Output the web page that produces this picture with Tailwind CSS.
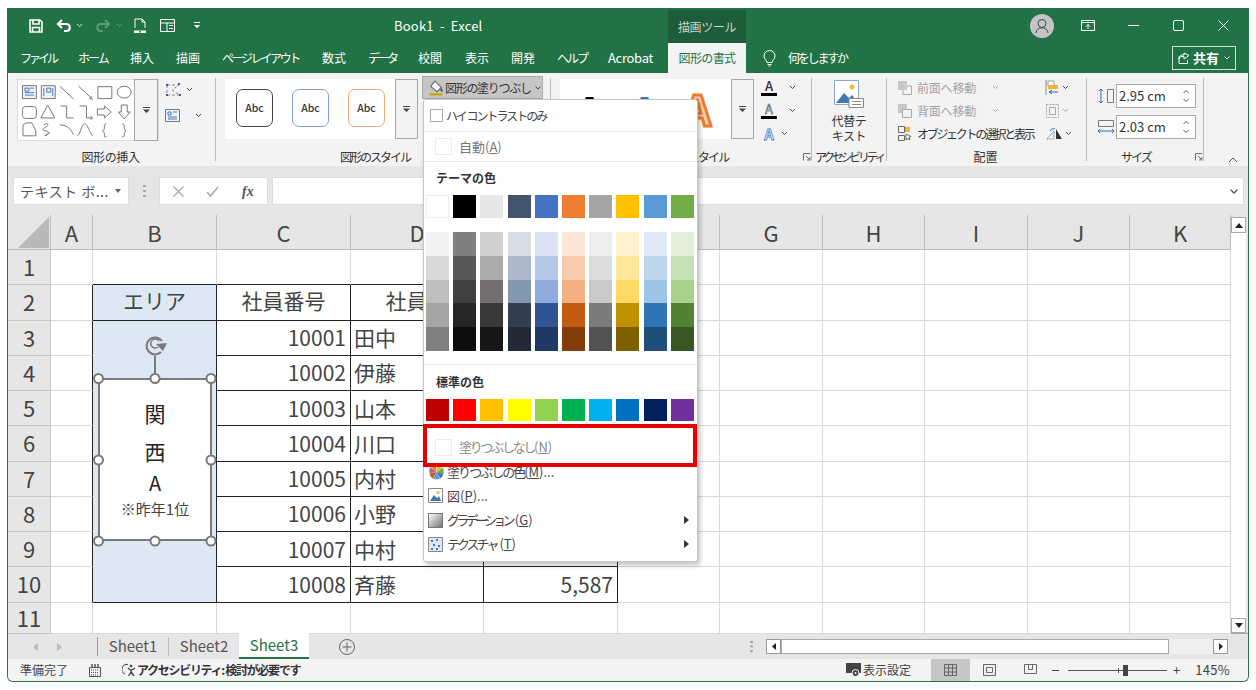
<!DOCTYPE html>
<html lang="ja">
<head>
    <meta charset="UTF-8">
    <script src="https://cdn.jsdelivr.net/npm/@tailwindcss/browser@4"></script>
    <title>Book1 - Excel</title>
</head>
<body class="bg-white font-['Noto_Sans_CJK_JP','Noto_Sans',sans-serif] text-[12px] text-[#333]">
<div class="relative w-[1256px] h-[690px] overflow-hidden pt-[8px] pl-[7px]">
    <div class="w-[1242px] h-[674px] flex flex-col overflow-hidden border-x border-b border-[#217346] rounded-b-md bg-[#e6e6e6]">

        <!-- Title bar -->
        <div class="h-[35px] shrink-0 bg-[#217346] flex items-center text-white">
            <div class="w-[660px] flex items-center pl-[21px] h-full">
                <svg class="w-[14px] h-[14px]" viewBox="0 0 14 14" fill="none" stroke="#fff" stroke-width="1.6"><path d="M1 1h10l2 2v10H1z"/><path d="M4 1v4h6V1M3.500 13V8.500h7V13"/></svg>
                <svg class="w-[16px] h-[14px] ml-[13px]" viewBox="0 0 16 14" fill="none" stroke="#fff" stroke-width="2.200"><path d="M6 1 2 5l4 4"/><path d="M2 5h8c5 0 5 7 0 7H8"/></svg>
                <svg class="w-[7px] h-[5px] ml-[4px]" viewBox="0 0 7 5" fill="none" stroke="#cfe0d6"><path d="m1 1 2.500 2.500L6 1"/></svg>
                <svg class="w-[16px] h-[14px] ml-[12px]" viewBox="0 0 16 14" fill="none" stroke="#5d9a78" stroke-width="2"><path d="m10 1 4 4-4 4"/><path d="M14 5H6c-5 0-5 7 0 7h2"/></svg>
                <svg class="w-[7px] h-[5px] ml-[5px]" viewBox="0 0 7 5" fill="none" stroke="#5d9a78"><path d="m1 1 2.500 2.500L6 1"/></svg>
                <svg class="w-[14px] h-[16px] ml-[10px]" viewBox="0 0 14 16" fill="none" stroke="#fff"><path d="M2 10V1h7l3 3v6M9 1v3h3"/><path d="M1 12.500h12v2.500H1z" fill="#fff" stroke="none"/><circle cx="7" cy="13.700" r="1" fill="#217346" stroke="none"/></svg>
                <svg class="w-[15px] h-[13px] ml-[13px]" viewBox="0 0 15 13" fill="none" stroke="#fff"><path d="M.5.500h14v12H.5zM.5 4h14M7 4v8.500M9 6.500h4M9 9.500h4"/></svg>
                <svg class="w-[6px] h-[7px] ml-[19px]" viewBox="0 0 6 7" fill="#fff"><path d="M0 0h6v1H0zM0 3h6L3 6.500z"/></svg>
                <span class="ml-[194px] text-[13px] tracking-[.2px] whitespace-pre">Book1  -  Excel</span>
            </div>
            <div class="w-[78px] h-[33px] self-end bg-[#1e5d3a] flex items-center justify-center text-[#c5d6cb] text-[12px] tracking-[-.4px]">描画ツール</div>
            <div class="flex-1 flex items-center h-full">
                <div class="ml-[284px] w-[24px] h-[24px] rounded-full bg-[#c4c4c4] flex items-center justify-center">
                    <svg class="w-[16px] h-[16px]" viewBox="0 0 16 16" fill="none" stroke="#444"><circle cx="8" cy="5.500" r="4"/><path d="M2 15c0-7 12-7 12 0"/></svg>
                </div>
                <svg class="w-[14px] h-[11px] ml-[27px]" viewBox="0 0 14 11" fill="none" stroke="#fff"><path d="M.5.500h13v10H.5zM.5 2.500h13"/><path d="M7 9V4.500M5 6.500l2-2 2 2"/></svg>
                <svg class="w-[11px] h-[2px] ml-[33px]" viewBox="0 0 11 2" fill="#fff"><path d="M0 0h11v1H0z"/></svg>
                <svg class="w-[11px] h-[11px] ml-[34px]" viewBox="0 0 11 11" fill="none" stroke="#fff"><rect x=".5" y=".5" width="10" height="10" rx="1.500"/></svg>
                <svg class="w-[11px] h-[11px] ml-[34px]" viewBox="0 0 11 11" fill="none" stroke="#fff"><path d="m.5.500 10 10M10.500.500l-10 10"/></svg>
            </div>
        </div>

        <!-- Ribbon tabs -->
        <div class="h-[30px] shrink-0 bg-[#217346] flex items-stretch pl-[12px] pr-[12px] text-white text-[12px] whitespace-nowrap">
            <div class="w-[58px] flex items-center tracking-[-3px]">ファイル</div>
            <div class="w-[52px] flex items-center tracking-[-2px]">ホーム</div>
            <div class="w-[46px] flex items-center">挿入</div>
            <div class="w-[46px] flex items-center">描画</div>
            <div class="w-[100px] flex items-center tracking-[-2.400px]">ページ レイアウト</div>
            <div class="w-[46px] flex items-center">数式</div>
            <div class="w-[50px] flex items-center tracking-[-2.500px]">データ</div>
            <div class="w-[47px] flex items-center">校閲</div>
            <div class="w-[46px] flex items-center">表示</div>
            <div class="w-[46px] flex items-center">開発</div>
            <div class="w-[51px] flex items-center tracking-[-2px]">ヘルプ</div>
            <div class="w-[60px] flex items-center text-[13px] tracking-[-.3px]">Acrobat</div>
            <div class="w-[78px] bg-[#f3f3f3] text-[#217346] flex items-center justify-center tracking-[-.6px]">図形の書式</div>
            <div class="flex items-center ml-[17px]">
                <svg class="w-[13px] h-[17px]" viewBox="0 0 13 17" fill="none" stroke="#fff"><path d="M4 12.500C3.500 10 1 9 1 6a5.500 5.500 0 0 1 11 0c0 3-2.500 4-3 6.500zM4.500 14.500h4M5.500 16h2"/></svg>
                <span class="ml-[12px] tracking-[-2.200px]">何をしますか</span>
            </div>
            <div class="ml-auto self-center w-[64px] h-[24px] border border-[#cfe0d6] flex items-center justify-center">
                <svg class="w-[12px] h-[12px]" viewBox="0 0 12 12" fill="none" stroke="#fff"><path d="M1 4.500v7h8.500V8M1 7l2-2.500h3V7l5-3.500L6 1v2H4C3 3 1 4 1 7z"/></svg>
                <span class="ml-[3px] font-bold text-[13px]">共有</span>
                <svg class="w-[6px] h-[4px] ml-[5px]" viewBox="0 0 6 4" fill="none" stroke="#fff"><path d="m.5.500 2.500 2.500L5.500.500"/></svg>
            </div>
        </div>

        <!-- Ribbon -->
        <div class="h-[93px] shrink-0 bg-[#f3f3f3] flex whitespace-nowrap">
            <!-- 図形の挿入 -->
            <div class="w-[207px] flex flex-col">
                <div class="flex-1 flex pl-[9px] pt-[6px]">
                    <div class="w-[142px] h-[62px] bg-white border border-[#dcdcdc] flex">
                        <svg class="w-[117px] h-[60px]" viewBox="0 0 117 60" fill="none" stroke="#777">
                            <path d="M4.500 5.500h14v13h-14z" fill="#eef3fa"/><path d="M7 8h4v3H7zM12 8h4M7 12.500h9M7 15h9" stroke="#4a78b8"/>
                            <path d="M23.500 5.500h14v13h-14z" fill="#eef3fa"/><path d="M26 8v8M29 8h4v4h-4zM35 8v8" stroke="#4a78b8"/>
                            <path d="m42 6 14 13M61 6l14 13M75 19l-3-.5 2.500-2.500"/>
                            <path d="M80.500 6.500h14v12h-14z"/><ellipse cx="107" cy="12" rx="7" ry="6"/>
                            <rect x="4.500" y="26.500" width="14" height="12" rx="3"/><path d="m30 25 7 13H23z"/>
                            <path d="M43 26h6v12h7M62 26h7v12h6M75 38l-2-2M75 38l-2 2"/>
                            <path d="M80 29h7v-3l7 6-7 6v-3h-7zM104 25h6v7h3l-6 7-6-7h3z"/>
                            <path d="M5 56v-9c0-3 2-4 5-4h4l4 8v5z"/><path d="M26 45c4-3 6 0 2 2s-4 4 0 4 3 4-1 5l5-3"/>
                            <path d="M42 45c6 0 11 3 14 10M60 56c3-2 4-12 7-12s5 8 8 12"/>
                            <path d="M89 44c-2 0-2 1-2 3s0 3-2 4c2 1 2 2 2 4s0 2 2 2M105 44c2 0 2 1 2 3s0 3 2 4c-2 1-2 2-2 4s0 2-2 2"/>
                        </svg>
                        <div class="w-[24px] border border-[#a6a6a6] h-[62px] -mt-px bg-[#f3f3f3] flex items-center justify-center">
                            <svg class="w-[7px] h-[6px]" viewBox="0 0 7 6" fill="#444"><path d="M0 0h7v1H0zM0 2.500h7L3.500 6z"/></svg>
                        </div>
                    </div>
                    <div class="ml-[6px] flex flex-col">
                        <div class="flex items-center h-[20px]">
                            <svg class="w-[17px] h-[15px]" viewBox="0 0 17 15" fill="none" stroke="#888"><path stroke-dasharray="3 2" d="M2 3h12l-7 5 8 5H2z"/><path d="M1 2h2v2H1zM13 1h2v2h-2zM1 12h2v2H1zM14 12h2v2h-2z" fill="#2f5f9e" stroke="none"/></svg>
                            <svg class="w-[7px] h-[5px] ml-[4px]" viewBox="0 0 7 5" fill="none" stroke="#444"><path d="m1 1 2.500 2.500L6 1"/></svg>
                        </div>
                        <div class="flex items-center h-[22px] mt-[5px]">
                            <svg class="w-[15px] h-[13px]" viewBox="0 0 15 13" fill="#eef3fa" stroke="#777"><path d="M.5.500h14v12H.5z"/><path d="M3 3h3v3H3zM8 3h4M3 8h9M3 10h9" fill="none" stroke="#4a78b8"/></svg>
                            <svg class="w-[7px] h-[5px] ml-[15px]" viewBox="0 0 7 5" fill="none" stroke="#444"><path d="m1 1 2.500 2.500L6 1"/></svg>
                        </div>
                    </div>
                </div>
                <div class="h-[16px] leading-[13px] text-center pr-[2px] pb-[3px] tracking-[-.4px]">図形の挿入</div>
            </div>
            <div class="w-px my-[5px] bg-[#bdbdbd]"></div>

            <!-- 図形のスタイル -->
            <div class="w-[334px] flex flex-col">
                <div class="flex-1 flex pl-[9px] pt-[6px]">
                    <div class="w-[193px] h-[60px] bg-white flex items-center">
                        <div class="ml-[11px] -mt-[2px] w-[37px] h-[38px] rounded-[7px] border-[1.5px] border-[#444] flex items-center justify-center text-[10.5px] font-medium">Abc</div>
                        <div class="ml-[19px] -mt-[2px] w-[37px] h-[38px] rounded-[7px] border-[1.5px] border-[#7f9fd3] flex items-center justify-center text-[10.5px] font-medium">Abc</div>
                        <div class="ml-[19px] -mt-[2px] w-[37px] h-[38px] rounded-[7px] border-[1.5px] border-[#f0a878] flex items-center justify-center text-[10.5px] font-medium">Abc</div>
                        <div class="ml-[10px] w-[23px] h-[60px] border border-[#a6a6a6] bg-[#f3f3f3] flex items-center justify-center">
                            <svg class="w-[7px] h-[6px]" viewBox="0 0 7 6" fill="#444"><path d="M0 0h7v1H0zM0 2.500h7L3.500 6z"/></svg>
                        </div>
                    </div>
                    <div class="ml-[4px] -mt-[3px] w-[121px] h-[23px] bg-[#c6c6c6] border border-[#aaa] flex items-center pl-[5px]">
                        <svg class="w-[16px] h-[16px]" viewBox="0 0 14 15" fill="none" stroke="#666"><path d="m6 1 6 6-4 4-6-5z" fill="#fff"/><path d="M12 8c1 1 1.500 2 .5 2.500S11 9 12 8z" fill="#4a78b8"/><path d="M1 13.500h12" stroke="#c8a800" stroke-width="2"/></svg>
                        <span class="ml-[1px] tracking-[-1.300px]">図形の塗りつぶし</span>
                        <svg class="w-[6px] h-[4px] ml-[4px]" viewBox="0 0 6 4" fill="none" stroke="#444"><path d="m.5.500 2.500 2.500L5.500.500"/></svg>
                    </div>
                </div>
                <div class="h-[16px] leading-[13px] pl-[124px] pb-[3px] tracking-[-2px]">図形のスタイル</div>
            </div>
            <div class="w-px my-[5px] bg-[#bdbdbd]"></div>

            <!-- ワードアートのスタイル -->
            <div class="w-[260px] flex flex-col">
                <div class="flex-1 flex pl-[9px] pt-[6px]">
                    <div class="w-[171px] h-[60px] bg-white flex items-start">
                        <span class="ml-[16px] text-[42px] leading-[62px] font-bold text-black">A</span>
                        <span class="ml-[28px] text-[42px] leading-[62px] font-bold text-[#4472c4]">A</span>
                        <span class="ml-[26px] text-[42px] leading-[58px] font-bold text-[#fbd5b5] [-webkit-text-stroke:3px_#ed7d31]">A</span>
                    </div>
                    <div class="w-[23px] h-[60px] border border-[#a6a6a6] bg-[#f3f3f3] flex items-center justify-center">
                        <svg class="w-[7px] h-[6px]" viewBox="0 0 7 6" fill="#444"><path d="M0 0h7v1H0zM0 2.500h7L3.500 6z"/></svg>
                    </div>
                    <div class="ml-[7px] -mt-[3px] flex flex-col">
                        <div class="flex items-center h-[23px]">
                            <span class="w-[16px] text-center font-medium border-b-[3px] border-black leading-[14px] text-[13px]">A</span>
                            <svg class="w-[7px] h-[5px] ml-[12px]" viewBox="0 0 7 5" fill="none" stroke="#444"><path d="m1 1 2.500 2.500L6 1"/></svg>
                        </div>
                        <div class="flex items-center h-[23px]">
                            <span class="w-[16px] text-center text-white [-webkit-text-stroke:.6px_#444] border-b-[3px] border-black leading-[14px] text-[13px]">A</span>
                            <svg class="w-[7px] h-[5px] ml-[12px]" viewBox="0 0 7 5" fill="none" stroke="#444"><path d="m1 1 2.500 2.500L6 1"/></svg>
                        </div>
                        <div class="flex items-center h-[23px]">
                            <span class="w-[16px] text-center text-[#dce9f8] [-webkit-text-stroke:.8px_#4a86d0] leading-[14px] text-[15px] font-bold">A</span>
                            <svg class="w-[7px] h-[5px] ml-[4px]" viewBox="0 0 7 5" fill="none" stroke="#444"><path d="m1 1 2.500 2.500L6 1"/></svg>
                        </div>
                    </div>
                </div>
                <div class="h-[16px] flex pb-[3px] leading-[13px]">
                    <span class="ml-[66px] w-[188px] tracking-[-1.800px]">ワードアートのスタイル</span>
                    <svg class="w-[8px] h-[8px] mt-[3px]" viewBox="0 0 8 8" fill="none" stroke="#666"><path d="M.5 7.500v-7h7M3 3l4 4M7 4v3H4"/></svg>
                </div>
            </div>
            <div class="w-px my-[5px] bg-[#bdbdbd]"></div>

            <!-- アクセシビリティ -->
            <div class="w-[74px] flex flex-col">
                <div class="flex-1 flex flex-col items-center pt-[7px]">
                    <svg class="w-[30px] h-[30px]" viewBox="0 0 30 30">
                        <path d="M.5.500h24v24H.5z" fill="#fff" stroke="#8aa8c8"/>
                        <circle cx="18" cy="7" r="2.500" fill="#f2b233"/>
                        <path d="m2 23 8-10 5 5 3-3 6 8z" fill="#3f78b5"/>
                        <path d="M15 18.500h14.500v9H15z" fill="#fff" stroke="#888"/><path d="M18 21.500h9M18 24.500h9" stroke="#888"/>
                    </svg>
                    <div class="leading-[15px] text-center mt-[3px] tracking-[-.4px]">代替テ<br>キスト</div>
                </div>
                <div class="h-[16px] leading-[13px] pb-[3px] pl-[3px] tracking-[-3.300px]">アクセシビリティ</div>
            </div>
            <div class="w-px my-[5px] bg-[#bdbdbd]"></div>

            <!-- 配置 -->
            <div class="w-[199px] flex flex-col">
                <div class="flex-1 flex flex-col pl-[11px] pt-[3px]">
                    <div class="h-[23px] flex items-center text-[#a3a3a3]">
                        <svg class="w-[14px] h-[14px]" viewBox="0 0 14 14" fill="none" stroke="#aaa"><path d="M0 0h9v9H0z" fill="#c8c8c8" stroke="none"/><path d="M9 5h4.500v8.500H5V9"/></svg>
                        <span class="ml-[5px] w-[75px] tracking-[-.2px]">前面へ移動</span>
                        <svg class="w-[7px] h-[5px]" viewBox="0 0 7 5" fill="none" stroke="#aaa"><path d="m1 1 2.500 2.500L6 1"/></svg>
                        <svg class="w-[15px] h-[17px] ml-[46px]" viewBox="0 0 15 17"><path d="M1 1v15" stroke="#888"/><path d="M3 2h6v5H3z" fill="#fff" stroke="#999"/><path d="M3 6h10v4H3z" fill="#f2b233"/><path d="M4 13h9M4 13l3-2M4 13l3 2" stroke="#2f6fb5" fill="none"/></svg>
                        <svg class="w-[7px] h-[5px] ml-[2px]" viewBox="0 0 7 5" fill="none" stroke="#444"><path d="m1 1 2.500 2.500L6 1"/></svg>
                    </div>
                    <div class="h-[23px] flex items-center text-[#a3a3a3]">
                        <svg class="w-[14px] h-[14px]" viewBox="0 0 14 14" fill="none" stroke="#aaa"><path d="M0 0h9v9H0z" fill="#c8c8c8" stroke="none"/><path d="M4.500 5.500h9v8h-9z" fill="#f3f3f3"/></svg>
                        <span class="ml-[5px] w-[75px] tracking-[-.2px]">背面へ移動</span>
                        <svg class="w-[7px] h-[5px]" viewBox="0 0 7 5" fill="none" stroke="#aaa"><path d="m1 1 2.500 2.500L6 1"/></svg>
                        <svg class="w-[15px] h-[16px] ml-[46px]" viewBox="0 0 15 16" fill="none" stroke="#aaa"><path stroke-dasharray="2 1" d="M1.500 1.500h12v13h-12z"/><path d="M4.500 4.500h6v7h-6z"/></svg>
                        <svg class="w-[7px] h-[5px] ml-[2px]" viewBox="0 0 7 5" fill="none" stroke="#aaa"><path d="m1 1 2.500 2.500L6 1"/></svg>
                    </div>
                    <div class="h-[23px] flex items-center">
                        <svg class="w-[14px] h-[15px]" viewBox="0 0 14 15" fill="none" stroke="#666"><path d="M.5.500h6v6h-6zM.5 9.500h6v5h-6z"/><path d="M7 1h5v5H7z" fill="#f2b233" stroke="none"/><path d="M8 8v6l2-1.500 2 1.500-1-3 2-.5z" fill="#fff"/></svg>
                        <span class="ml-[5px] w-[127px] tracking-[-2.300px]">オブジェクトの選択と表示</span>
                        <svg class="w-[17px] h-[13px] ml-[2px]" viewBox="0 0 17 13"><path d="m1 12 7-8v8z" fill="none" stroke="#888" stroke-dasharray="2 1"/><path d="m10 12 0-10 6 10z" fill="#333"/><path d="M4 4c1-2 3-3 5-2" fill="none" stroke="#2f6fb5"/></svg>
                        <svg class="w-[7px] h-[5px] ml-[2px]" viewBox="0 0 7 5" fill="none" stroke="#444"><path d="m1 1 2.500 2.500L6 1"/></svg>
                    </div>
                </div>
                <div class="h-[16px] leading-[13px] pb-[3px] text-center pr-[2px]">配置</div>
            </div>
            <div class="w-px my-[5px] bg-[#bdbdbd]"></div>

            <!-- サイズ -->
            <div class="w-[116px] flex flex-col">
                <div class="flex-1 flex flex-col pl-[10px] pt-[11px]">
                    <div class="flex items-center h-[24px]">
                        <svg class="w-[18px] h-[16px]" viewBox="0 0 18 16" fill="none"><path d="M4 1v14M2 3l2-2 2 2M2 13l2 2 2-2" stroke="#2f6fb5"/><path d="M10.500 1.500h6v13h-6z" stroke="#777"/></svg>
                        <div class="ml-[1px] w-[80px] h-[24px] bg-white border border-[#aaa] flex items-center justify-between pl-[2px] pr-[6px] text-[13px]">
                            <span>2.95 cm</span>
                            <svg class="w-[6px] h-[14px]" viewBox="0 0 6 14" fill="none" stroke="#555"><path d="m.5 4 2.500-2.500L5.500 4M.5 10l2.500 2.500L5.500 10"/></svg>
                        </div>
                    </div>
                    <div class="flex items-center h-[24px] mt-[7px]">
                        <svg class="w-[18px] h-[16px]" viewBox="0 0 18 16" fill="none"><path d="M1.500 1.500h15v6h-15z" stroke="#777"/><path d="M1 12h16M3 10l-2 2 2 2M15 10l2 2-2 2" stroke="#2f6fb5"/></svg>
                        <div class="ml-[1px] w-[80px] h-[24px] bg-white border border-[#aaa] flex items-center justify-between pl-[2px] pr-[6px] text-[13px]">
                            <span>2.03 cm</span>
                            <svg class="w-[6px] h-[14px]" viewBox="0 0 6 14" fill="none" stroke="#555"><path d="m.5 4 2.500-2.500L5.500 4M.5 10l2.500 2.500L5.500 10"/></svg>
                        </div>
                    </div>
                </div>
                <div class="h-[16px] leading-[13px] pb-[3px] flex">
                    <span class="ml-[34px] w-[76px] tracking-[-2px]">サイズ</span>
                    <svg class="w-[8px] h-[8px] mt-[3px]" viewBox="0 0 8 8" fill="none" stroke="#666"><path d="M.5 7.500v-7h7M3 3l4 4M7 4v3H4"/></svg>
                </div>
            </div>
            <div class="w-px my-[5px] bg-[#bdbdbd]"></div>
            <div class="flex-1 flex items-end justify-center pb-[3px] pl-[14px]">
                <svg class="w-[10px] h-[6px]" viewBox="0 0 10 6" fill="none" stroke="#555"><path d="m1 5 4-4 4 4"/></svg>
            </div>
        </div>

        <!-- Formula bar -->
        <div class="h-[49px] shrink-0 bg-[#e6e6e6] flex items-start pt-[11px] pl-[5px]">
            <div class="w-[116px] h-[28px] bg-white border border-[#dcdcdc] flex items-center pl-[6px] text-[14px] tracking-[.5px] text-[#555] whitespace-nowrap">
                テキスト ボ...
                <svg class="w-[6px] h-[4px] ml-[6px]" viewBox="0 0 6 4" fill="#666"><path d="M0 0h6L3 4z"/></svg>
            </div>
            <svg class="w-[3px] h-[12px] ml-[14px] mt-[8px]" viewBox="0 0 3 12" fill="#aaa"><path d="M0 0h3v2H0zM0 5h3v2H0zM0 10h3v2H0z"/></svg>
            <div class="w-[109px] h-[28px] ml-[13px] bg-white border border-[#dcdcdc] flex items-center">
                <svg class="w-[11px] h-[11px] ml-[13px]" viewBox="0 0 11 11" fill="none" stroke="#a9a9a9" stroke-width="1.300"><path d="m.5.500 10 10M10.500.500l-10 10"/></svg>
                <svg class="w-[13px] h-[11px] ml-[22px]" viewBox="0 0 13 11" fill="none" stroke="#a9a9a9" stroke-width="1.500"><path d="m1 6 3.500 4L12 1"/></svg>
                <span class="ml-[23px] font-['Liberation_Serif',serif] italic font-bold text-[14px] text-[#555]">fx</span>
            </div>
            <div class="w-[972px] h-[28px] ml-[4px] bg-white border border-[#dcdcdc] flex items-center justify-end pr-[5px]">
                <svg class="w-[8px] h-[5px]" viewBox="0 0 8 5" fill="none" stroke="#555" stroke-width="1.300"><path d="m.5.500 3.500 3.500L7.500.500"/></svg>
            </div>
        </div>

        <!-- Sheet -->
        <div class="h-[419px] shrink-0 flex">
            <div id="sheet" class="w-[1223px] grid grid-cols-[43px_42px_124px_134px_133px_134px_102px_103px_102px_103px_102px_101px] grid-rows-[35px_repeat(10,35.25px)_31.5px] text-[21px] leading-none"></div>
            <div class="w-[17px] border-b border-[#a6a6a6]">
                <div class="h-[418px] pr-[2px] flex flex-col">
                    <div class="mt-[2px] h-[16px] bg-white border border-[#aaa] flex items-center justify-center">
                        <svg class="w-[8px] h-[5px]" viewBox="0 0 8 5" fill="#222"><path d="M0 5h8L4 0z"/></svg>
                    </div>
                    <div class="flex-1 bg-white"></div>
                    <div class="h-[15px] bg-white border border-[#aaa] flex items-center justify-center">
                        <svg class="w-[8px] h-[5px]" viewBox="0 0 8 5" fill="#222"><path d="M0 0h8L4 5z"/></svg>
                    </div>
                </div>
            </div>
        </div>

        <!-- Sheet tabs -->
        <div class="h-[25px] shrink-0 bg-[#e6e6e6] flex items-stretch text-[15px] text-[#555]">
            <svg class="w-[5px] h-[8px] ml-[25px] self-center" viewBox="0 0 5 8" fill="#bbb"><path d="M5 0v8L0 4z"/></svg>
            <svg class="w-[5px] h-[8px] ml-[19px] self-center" viewBox="0 0 5 8" fill="#bbb"><path d="M0 0v8l5-4z"/></svg>
            <div class="ml-[35px] w-px my-[3px] bg-[#999]"></div>
            <div class="w-[70px] flex items-center justify-center">Sheet1</div>
            <div class="w-px my-[3px] bg-[#bbb]"></div>
            <div class="w-[70px] flex items-center justify-center">Sheet2</div>
            <div class="w-[70px] bg-white border-b-2 border-[#217346] -mt-px text-[#217346] flex items-center justify-center">Sheet3</div>
            <svg class="w-[16px] h-[16px] ml-[30px] self-center" viewBox="0 0 16 16" fill="none" stroke="#666"><circle cx="8" cy="8" r="7.500"/><path d="M8 3.500v9M3.500 8h9"/></svg>
            <svg class="w-[3px] h-[11px] ml-[395px] self-center" viewBox="0 0 3 11" fill="#aaa"><path d="M0 0h3v2H0zM0 4.500h3v2H0zM0 9h3v2H0z"/></svg>
            <div class="ml-[13px] self-center h-[15px] w-[15px] bg-white border border-[#999] flex items-center justify-center">
                <svg class="w-[4px] h-[7px]" viewBox="0 0 4 7" fill="#222"><path d="M4 0v7L0 3.500z"/></svg>
            </div>
            <div class="self-center h-[15px] w-[388px] bg-white border border-[#aaa]"></div>
            <div class="self-center h-[15px] w-[44px] bg-[#efefef]"></div>
            <div class="self-center h-[15px] w-[15px] bg-white border border-[#999] flex items-center justify-center">
                <svg class="w-[4px] h-[7px]" viewBox="0 0 4 7" fill="#222"><path d="M0 0v7l4-3.500z"/></svg>
            </div>
        </div>

        <!-- Status bar -->
        <div class="flex-1 bg-[#f3f3f3] flex items-center text-[#444] whitespace-nowrap">
            <span class="ml-[12px]">準備完了</span>
            <svg class="w-[12px] h-[13px] ml-[21px]" viewBox="0 0 12 13" fill="none" stroke="#555"><path d="M.5 3.500h11v9H.5z"/><path d="M3 0v3M6 0v3M9 0v3" stroke-width="1.500"/><path d="M2 6h8M2 8.500h8M2 11h8" stroke-dasharray="1 1"/></svg>
            <svg class="w-[15px] h-[14px] ml-[21px]" viewBox="0 0 15 14" fill="none" stroke="#444"><path d="M6 1.500A5 5 0 0 0 3 11"/><path d="m6 5 3 2.500 4-2.500M9 7.500V9l-2.500 4M9 9l3 4" stroke-width="1.300"/><circle cx="9" cy="3" r="1" fill="#444"/></svg>
            <span class="font-bold tracking-[-1.300px] text-[#333] w-[163px]">アクセシビリティ: 検討が必要です</span>
            <svg class="w-[15px] h-[14px] ml-[546px]" viewBox="0 0 15 14"><path d="M0 0h15v10H0z" fill="#444"/><circle cx="9.500" cy="10" r="3.500" fill="#444" stroke="#f3f3f3"/><circle cx="9.500" cy="10" r="1" fill="#f3f3f3"/></svg>
            <span class="ml-[2px] text-[12px]">表示設定</span>
            <div class="ml-[20px] w-[39px] h-[22px] bg-[#c6c6c6] flex items-center justify-center">
                <svg class="w-[13px] h-[12px]" viewBox="0 0 13 12" fill="none" stroke="#666"><path d="M.5.500h12v11H.5zM4.500.500v11M8.500.500v11M.5 4h12M.5 8h12"/></svg>
            </div>
            <svg class="w-[13px] h-[12px] ml-[13px]" viewBox="0 0 13 12" fill="none" stroke="#666"><path d="M.5.500h12v11H.5zM3.500 3.500h6v5h-6z"/></svg>
            <svg class="w-[13px] h-[12px] ml-[28px]" viewBox="0 0 13 12" fill="none" stroke="#666"><path d="M.5.500h12v9H.5zM4.500.500v5h4v-5"/></svg>
            <span class="ml-[15px] w-[7px] h-px bg-[#444]"></span>
            <div class="relative ml-[9px] w-[99px] h-px bg-[#555]">
                <span class="absolute left-[50px] -top-[2px] w-px h-[5px] bg-[#555]"></span>
                <span class="absolute left-[55px] -top-[5px] w-[5px] h-[11px] bg-[#444]"></span>
            </div>
            <span class="ml-[6px] text-[13px]">+</span>
            <span class="ml-[15px] text-[13px] tracking-[.3px]">145%</span>
        </div>
    </div>

    <!-- Selected text box -->
    <div class="absolute left-[98px] top-[378px] w-[114px] h-[163px] bg-white border-2 border-[#7a7a7a] flex flex-col items-center text-[21px] leading-none text-[#222]">
        <span class="mt-[23px]">関</span>
        <span class="mt-[17px]">西</span>
        <span class="mt-[11px] text-[20px]">A</span>
        <span class="mt-[8px] text-[15px] text-[#444] whitespace-nowrap">※昨年1位</span>
    </div>
    <svg class="absolute left-[90px] top-[332px] w-[130px] h-[220px]" viewBox="0 0 130 220" fill="#fff" stroke="#7a7a7a" stroke-width="2">
        <path d="M65 24v22" fill="none"/>
        <path d="M72 9a8.500 8.500 0 1 0-1 11" fill="none" stroke-width="2"/>
        <path d="M69 9a4.500 4.500 0 1 0-1 6" fill="none" stroke-width="1.500"/>
        <path d="m66 12 11-1-4 8z" fill="#7a7a7a" stroke="none"/>
        <circle cx="8.500" cy="46.500" r="4.500"/><circle cx="65" cy="46.500" r="4.500"/><circle cx="121" cy="46.500" r="4.500"/>
        <circle cx="8.500" cy="128" r="4.500"/><circle cx="121" cy="128" r="4.500"/>
        <circle cx="8.500" cy="209" r="4.500"/><circle cx="65" cy="209" r="4.500"/><circle cx="121" cy="209" r="4.500"/>
    </svg>

    <!-- Fill colour menu -->
    <div class="absolute left-[423px] top-[99px] w-[275px] h-[463px] bg-white border border-[#c6c6c6] rounded-[3px] shadow-[2px_3px_5px_rgba(0,0,0,.25)] flex flex-col text-[#444] whitespace-nowrap">
        <div class="h-[32px] shrink-0 flex items-center pl-[6px] border-b border-[#e6e6e6]">
            <span class="w-[13px] h-[13px] border border-[#aaa] bg-white"></span>
            <span class="ml-[3px] tracking-[-2px]">ハイ コントラストのみ</span>
        </div>
        <div class="h-[30px] shrink-0 flex items-center pl-[11px] border-b border-[#e6e6e6] text-[#777] text-[13px]">
            <span class="w-[17px] h-[17px] border border-[#ececec]"></span>
            <span class="ml-[7px]">自動(<u>A</u>)</span>
        </div>
        <div class="h-[30px] shrink-0 flex items-center pl-[12px] font-bold text-[#333] pt-[2px]">テーマの色</div>
        <div id="theme" class="h-[23px] shrink-0 mt-[3px] flex gap-[4.2px] pl-[2px]"></div>
        <div id="shades" class="h-[119px] shrink-0 mt-[14px] flex gap-[4.2px] pl-[2px]"></div>
        <div class="mt-[13px] shrink-0 h-px bg-[#e6e6e6]"></div>
        <div class="h-[34px] shrink-0 flex items-center pl-[12px] font-bold text-[#333]">標準の色</div>
        <div id="standard" class="h-[22px] shrink-0 flex gap-[4.2px] pl-[2px]"></div>
        <div class="relative mt-[3px] -ml-px w-[274px] h-[43px] shrink-0 border-4 border-[#e60000] bg-white flex items-center pl-[8px] pt-[3px] text-[#888] z-10">
            <span class="w-[17px] h-[17px] border border-[#ececec]"></span>
            <span class="ml-[7px] text-[13px]"><span class="tracking-[-2.300px]">塗りつぶしなし</span>(<u>N</u>)</span>
        </div>
        <div class="h-[10px] shrink-0 flex items-start pl-[5px] mt-[1px]">
            <svg class="w-[15px] h-[15px] -mt-[3px] shrink-0" viewBox="0 0 15 15"><path d="M7.500 7.500 2 2a8 8 0 0 1 5-2z" fill="#ed7d31"/><path d="M7.500 7.500 8 0a8 8 0 0 1 5 2z" fill="#f2b233"/><path d="m7.500 7.500 6-5a8 8 0 0 1 1 6z" fill="#70ad47"/><path d="m7.500 7.500 7 1a8 8 0 0 1-3 5z" fill="#4472c4"/><path d="m7.500 7.500 3.500 6a8 8 0 0 1-7 0z" fill="#5b9bd5"/><path d="M7.500 7.500 3.500 13.500a8 8 0 0 1-3-5z" fill="#c55a11"/><path d="M7.500 7.500.5 8a8 8 0 0 1 1-6z" fill="#bf5b8a"/></svg>
            <span class="ml-[3px] -mt-[6px] text-[13px]"><span class="tracking-[-2px]">塗りつぶしの色</span>(<u>M</u>)...</span>
        </div>
        <div class="h-[25px] shrink-0 flex items-center pl-[4px] mt-[5px]">
            <svg class="w-[15px] h-[15px]" viewBox="0 0 15 15"><path d="M.5.500h14v14H.5z" fill="#fff" stroke="#888"/><path d="m2 13 4-6 3 3 2-2 2 5z" fill="#3f78b5"/><circle cx="10" cy="4.500" r="1.500" fill="#f2b233"/></svg>
            <span class="ml-[4px] text-[13px]">図(<u>P</u>)...</span>
        </div>
        <div class="h-[24px] shrink-0 flex items-center pl-[4px]">
            <span class="w-[15px] h-[15px] border border-[#777] bg-gradient-to-br from-white to-[#777]"></span>
            <span class="ml-[4px] flex-1 text-[13px]"><span class="tracking-[-3.700px]">グラデーション</span> (<u>G</u>)</span>
            <svg class="w-[5px] h-[8px] mr-[8px]" viewBox="0 0 5 8" fill="#333"><path d="M0 0v8l5-4z"/></svg>
        </div>
        <div class="h-[24px] shrink-0 flex items-center pl-[4px]">
            <svg class="w-[15px] h-[15px]" viewBox="0 0 15 15"><path d="M.5.500h14v14H.5z" fill="#dfe8f2" stroke="#888"/><path d="M3 3h2v2H3zM8 2h2v2H8zM5 7h2v2H5zM10 8h2v2h-2zM3 11h2v2H3zM8 11h2v2H8z" fill="#4a78b8"/></svg>
            <span class="ml-[4px] flex-1 text-[13px]"><span class="tracking-[-3px]">テクスチャ</span> (<u>T</u>)</span>
            <svg class="w-[5px] h-[8px] mr-[8px]" viewBox="0 0 5 8" fill="#333"><path d="M0 0v8l5-4z"/></svg>
        </div>
    </div>
</div>

<script>
    // Grid cells
    var cols = ['A','B','C','D','E','F','G','H','I','J','K'];
    var ids = ['10001','10002','10003','10004','10005','10006','10007','10008'];
    var names = ['田中','伊藤','山本','川口','内村','小野','中村','斉藤'];
    var html = '<div class="relative bg-[#e6e6e6] border-r border-[#bdbdbd] border-b overflow-hidden"><span class="absolute right-[1px] bottom-[1px] w-0 h-0 border-l-[31px] border-t-[31px] border-l-transparent border-t-transparent border-b-0 border-r-[31px] border-r-[#b8b8b8]"></span></div>';
    cols.forEach(function (c) {
        html += '<div class="flex items-center justify-center bg-[#e6e6e6] border-r border-b border-[#bdbdbd] text-[#444] text-[22px]">' + c + '</div>';
    });
    for (var r = 1; r <= 11; r++) {
        html += '<div class="flex items-center justify-center pb-[2px] bg-[#e6e6e6] border-r border-b border-[#c8c8c8] text-[#444] text-[22px]">' + r + '</div>';
        var inTable = r >= 2 && r <= 10;
        var above = r === 1;
        for (var i = 0; i < cols.length; i++) {
            var c = cols[i];
            var dark = (inTable && 'BCDE'.indexOf(c) >= 0);
            var bottom = (dark || (above && 'BCDE'.indexOf(c) >= 0)) ? 'border-b-[#222]' : 'border-b-[#d9d9d9]';
            var right = ((c === 'A' && inTable) || dark) ? 'border-r-[#222]' : 'border-r-[#d9d9d9]';
            var cls = 'border-r border-b flex items-center ' + bottom + ' ' + right;
            var bg = 'bg-white';
            var text = '';
            if (c === 'B' && r === 3) {
                html += '<div class="row-span-8 bg-[#dce9f5] border-r border-b border-r-[#222] border-b-[#222]"></div>';
                continue;
            }
            if (c === 'B' && r > 3 && r <= 10) continue;
            if (c === 'B' && r === 2) { bg = 'bg-[#dce9f5]'; cls += ' justify-center pb-[3px] text-[#444]'; text = 'エリア'; }
            if (c === 'C' && r === 2) { cls += ' justify-center pb-[3px] text-[#444]'; text = '社員番号'; }
            if (c === 'D' && r === 2) { cls += ' justify-center pb-[3px] text-[#444]'; text = '社員名'; }
            if (c === 'C' && r >= 3 && r <= 10) { cls += ' justify-end pr-[4px] text-[#444]'; text = ids[r - 3]; }
            if (c === 'D' && r >= 3 && r <= 10) { cls += ' pl-[3px] text-[#444]'; text = names[r - 3]; }
            if (c === 'E' && r === 10) { cls += ' justify-end pr-[4px] text-[#444]'; text = '5,587'; }
            html += '<div class="' + bg + ' ' + cls + '">' + text + '</div>';
        }
    }
    document.getElementById('sheet').innerHTML = html;

    // Menu swatches
    var theme = ['bg-white border border-[#eeeeee]','bg-black','bg-[#e7e6e6]','bg-[#44546a]','bg-[#4472c4]','bg-[#ed7d31]','bg-[#a5a5a5]','bg-[#ffc000]','bg-[#5b9bd5]','bg-[#70ad47]'];
    var shades = [
        ['bg-[#f2f2f2]','bg-[#d9d9d9]','bg-[#bfbfbf]','bg-[#a6a6a6]','bg-[#808080]'],
        ['bg-[#7f7f7f]','bg-[#595959]','bg-[#404040]','bg-[#262626]','bg-[#0d0d0d]'],
        ['bg-[#d0cece]','bg-[#aeabab]','bg-[#757070]','bg-[#3b3838]','bg-[#171717]'],
        ['bg-[#d6dce5]','bg-[#adb9ca]','bg-[#8497b0]','bg-[#333f50]','bg-[#222a35]'],
        ['bg-[#dae3f3]','bg-[#b4c7e7]','bg-[#8faadc]','bg-[#2f5597]','bg-[#1f3864]'],
        ['bg-[#fbe5d6]','bg-[#f8cbad]','bg-[#f4b183]','bg-[#c55a11]','bg-[#843c0c]'],
        ['bg-[#ededed]','bg-[#dbdbdb]','bg-[#c9c9c9]','bg-[#7b7b7b]','bg-[#525252]'],
        ['bg-[#fff2cc]','bg-[#ffe699]','bg-[#ffd966]','bg-[#bf9000]','bg-[#7f6000]'],
        ['bg-[#deebf7]','bg-[#bdd7ee]','bg-[#9dc3e6]','bg-[#2e75b6]','bg-[#1f4e79]'],
        ['bg-[#e2f0d9]','bg-[#c5e0b4]','bg-[#a9d18e]','bg-[#548235]','bg-[#385723]']
    ];
    var standard = ['bg-[#c00000]','bg-[#ff0000]','bg-[#ffc000]','bg-[#ffff00]','bg-[#92d050]','bg-[#00b050]','bg-[#00b0f0]','bg-[#0070c0]','bg-[#002060]','bg-[#7030a0]'];
    document.getElementById('theme').innerHTML = theme.map(function (b) { return '<div class="w-[23px] h-[23px] ' + b + '"></div>'; }).join('');
    document.getElementById('standard').innerHTML = standard.map(function (b) { return '<div class="w-[23px] h-[22px] ' + b + '"></div>'; }).join('');
    document.getElementById('shades').innerHTML = shades.map(function (col) {
        return '<div class="w-[23px] flex flex-col">' + col.map(function (b) { return '<div class="h-[24px] ' + b + '"></div>'; }).join('') + '</div>';
    }).join('');
</script>
</body>
</html>
